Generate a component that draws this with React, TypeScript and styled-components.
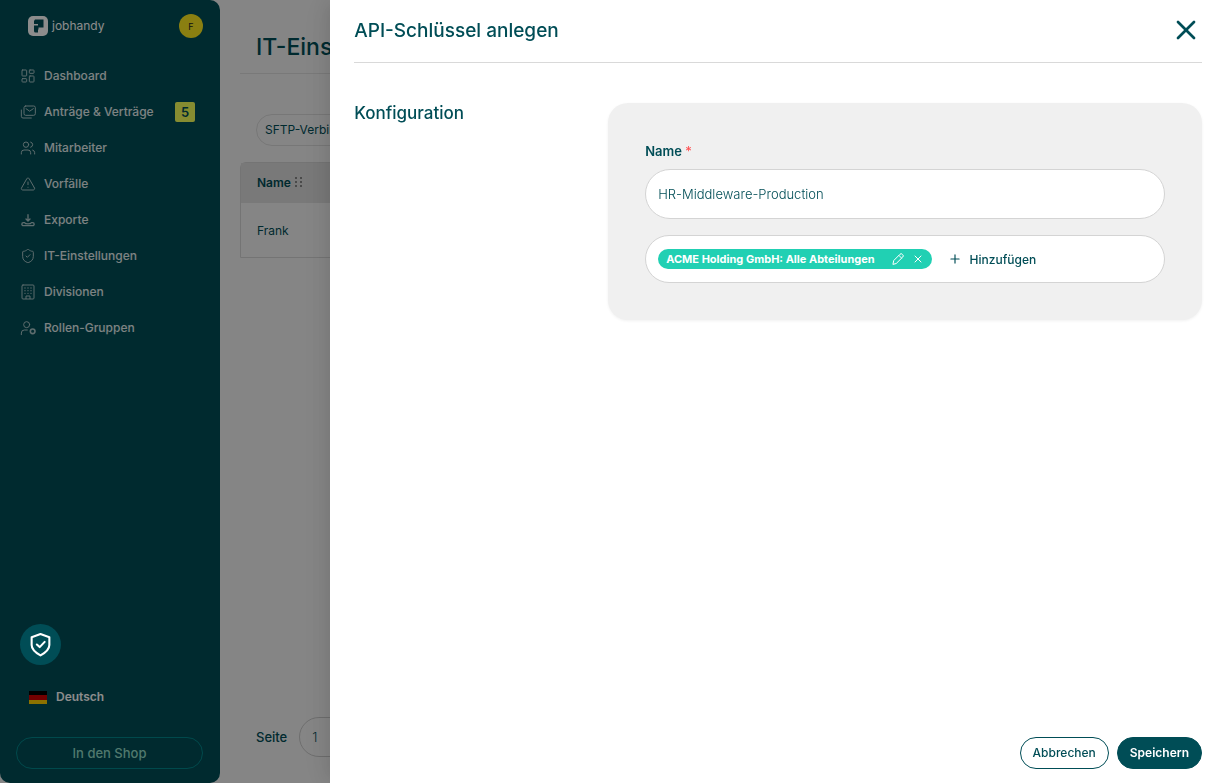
import React from "react";
import styled, { createGlobalStyle } from "styled-components";
import { LayoutDashboard, Users, TriangleAlert, ShieldCheck, X, Plus } from "lucide-react";

const teal = "#004d56";

const GlobalStyle = createGlobalStyle`
  *, *::before, *::after { box-sizing: border-box; }
  body { margin: 0; color: ${teal}; }
  body, button, input { font-family: Inter, "Liberation Sans", sans-serif; }
  button { cursor: pointer; }
`;

const Page = styled.div`
  display: grid;
  grid-template-columns: 220px minmax(0, 1fr);
  min-height: 100vh;
  overflow: hidden;
  background: #f3f3f3;
`;

const Sidebar = styled.aside`
  display: flex;
  flex-direction: column;
  padding: 14px 17px 14px 16px;
  background: ${teal};
  border-radius: 0 10px 10px 10px;
`;

const SidebarHeader = styled.div`
  display: flex;
  align-items: center;
  justify-content: space-between;
  padding-left: 12px;
`;

const Brand = styled.a`
  display: flex;
  align-items: center;
  gap: 4px;
  color: #fff;
  font-size: 12px;
  line-height: 20px;
  text-decoration: none;
`;

const Avatar = styled.button`
  width: 24px;
  height: 24px;
  padding: 0;
  border: 0;
  border-radius: 50%;
  background: #fbe81f;
  color: #222;
  font-size: 9px;
`;

const Nav = styled.nav`
  display: flex;
  flex-direction: column;
  margin-top: 20px;
`;

const NavLink = styled.a`
  display: flex;
  align-items: center;
  gap: 8px;
  height: 36px;
  padding: 0 8px 0 4px;
  color: #e4eeee;
  font-size: 12px;
  font-weight: 500;
  text-decoration: none;
  svg { flex: none; opacity: 0.75; }
`;

const NavLabel = styled.span`
  padding-bottom: 2px;
`;

const Badge = styled.span`
  margin-left: auto;
  width: 20px;
  height: 20px;
  border-radius: 2px;
  background: #f5ff5a;
  color: ${teal};
  font-size: 13px;
  font-weight: 600;
  line-height: 20px;
  text-align: center;
`;

const Language = styled.button`
  display: flex;
  align-items: center;
  gap: 9px;
  margin: auto 0 30px;
  padding: 0 13px;
  border: 0;
  background: none;
  color: #fff;
  font-size: 12px;
  font-weight: 600;
  line-height: 20px;
`;

const ShopButton = styled.button`
  height: 32px;
  padding-bottom: 2px;
  border: 1px solid #00868a;
  border-radius: 16px;
  background: none;
  color: #94dcc8;
  font-size: 13px;
  font-weight: 500;
`;

const Main = styled.main`
  display: flex;
  flex-direction: column;
  padding: 30px 20px 26px;
`;

const PageTitle = styled.h1`
  margin: 0;
  padding: 0 16px 8px;
  border-bottom: 1px solid #ddd;
  font-size: 23px;
  font-weight: 500;
  line-height: 35px;
`;

const FilterButton = styled.button`
  align-self: flex-start;
  height: 32px;
  margin: 40px 16px 16px;
  padding: 0 8px 2px;
  border: 1px solid #d9d9d9;
  border-radius: 16px;
  background: none;
  color: ${teal};
  font-size: 12px;
`;

const Table = styled.table`
  width: 100%;
  border: 1px solid #d4d4d4;
  border-collapse: separate;
  border-spacing: 0;
  border-radius: 6px 6px 0 0;
  font-size: 12px;
  text-align: left;
  th { height: 40px; padding: 0 16px 2px; background: #dcdcdc; font-weight: 600; }
  td { height: 54px; padding: 0 16px; }
`;

const Pagination = styled.label`
  display: flex;
  align-items: center;
  gap: 12px;
  margin-top: auto;
  padding-left: 16px;
  font-size: 13px;
  font-weight: 500;
`;

const PageInput = styled.input`
  width: 80px;
  height: 40px;
  padding: 0 12px;
  border: 1px solid #c8c8c8;
  border-radius: 20px;
  background: none;
  color: ${teal};
  font-size: 13px;
  font-weight: 300;
`;

const Mask = styled.div`
  position: fixed;
  inset: 0;
  background: rgba(0, 0, 0, 0.45);
`;

const Drawer = styled.section`
  position: fixed;
  inset: 0 0 0 auto;
  display: flex;
  flex-direction: column;
  width: 73%;
  padding: 0 21px 0 24px;
  background: #fff;
  box-shadow: -6px 0 16px rgba(0, 0, 0, 0.08), -9px 0 28px rgba(0, 0, 0, 0.05);
`;

const DrawerHeader = styled.header`
  display: flex;
  align-items: center;
  justify-content: space-between;
  height: 63px;
  padding-bottom: 2px;
  border-bottom: 1px solid #d9d9d9;
`;

const DrawerTitle = styled.h2`
  margin: 0;
  padding-top: 2px;
  font-size: 19px;
  font-weight: 500;
  line-height: 28px;
`;

const IconButton = styled.button`
  display: flex;
  padding: 0;
  border: 0;
  background: none;
  color: inherit;
`;

const DrawerBody = styled.div`
  display: grid;
  grid-template-columns: 254px minmax(0, 1fr);
  flex: 1;
  align-items: start;
  padding-top: 40px;
`;

const SectionTitle = styled.h3`
  margin: 0;
  font-size: 17px;
  font-weight: 500;
  line-height: 20px;
`;

const Card = styled.div`
  padding: 38px 37px 37px;
  border-radius: 20px;
  background: #f0f0f0;
  box-shadow: 0 1px 3px rgba(0, 0, 0, 0.06);
`;

const FieldLabel = styled.label`
  display: block;
  margin-bottom: 8px;
  font-size: 13px;
  font-weight: 600;
  line-height: 20px;
`;

const Required = styled.span`
  color: #ff4d4f;
  font-weight: 400;
`;

const TextInput = styled.input`
  display: block;
  width: 100%;
  height: 50px;
  margin-bottom: 16px;
  padding: 0 12px;
  border: 1px solid #d4d4d4;
  border-radius: 25px;
  background: #fff;
  color: ${teal};
  font-size: 13px;
  font-weight: 300;
`;

const TagField = styled.div`
  display: flex;
  align-items: center;
  gap: 16px;
  height: 48px;
  padding: 0 12px;
  border: 1px solid #d4d4d4;
  border-radius: 24px;
  background: #fff;
`;

const Tag = styled.span`
  display: flex;
  align-items: center;
  gap: 8px;
  height: 20px;
  padding: 0 8px;
  border-radius: 10px;
  background: #21d0b3;
  color: #fff;
  font-size: 11px;
  font-weight: 700;
`;

const TagText = styled.span`
  margin-right: 9px;
`;

const AddButton = styled.button`
  display: flex;
  align-items: center;
  gap: 8px;
  padding: 0;
  border: 0;
  background: none;
  color: ${teal};
  font-size: 12px;
  font-weight: 500;
`;

const DrawerFooter = styled.footer`
  display: flex;
  justify-content: flex-end;
  gap: 8px;
  padding-bottom: 14px;
`;

const ActionButton = styled.button<{ $primary?: boolean }>`
  height: 32px;
  padding: 0 12px 2px;
  border: 1px solid ${teal};
  border-radius: 16px;
  background: ${(p) => (p.$primary ? teal : "#fff")};
  color: ${(p) => (p.$primary ? "#fff" : teal)};
  font-size: 12px;
  font-weight: ${(p) => (p.$primary ? 600 : 500)};
`;

const ConsentButton = styled.button`
  position: fixed;
  bottom: 118px;
  left: 20px;
  display: flex;
  align-items: center;
  justify-content: center;
  width: 41px;
  height: 41px;
  padding: 0;
  border: 0;
  border-radius: 50%;
  background: ${teal};
  color: #fff;
`;

const LineIcon = ({ children, size = 16, width = 1.5 }: { children: React.ReactNode; size?: number; width?: number }) => (
  <svg width={size} height={size} viewBox="0 0 24 24" fill="none" stroke="currentColor" strokeWidth={width} strokeLinecap="round" strokeLinejoin="round" aria-hidden="true">
    {children}
  </svg>
);

const Logo = () => (
  <svg width="20" height="20" viewBox="0 0 20 20" aria-hidden="true">
    <rect width="20" height="20" rx="5" fill="#fff" />
    <path d="M7 3.500h8.500V11.500H10.500V13.500H6V9.500H10V8H6V5z" fill={teal} />
    <path d="M6 13H10v3.500H7.500a1.500 1.500 0 0 1-1.500-1.500z" fill={teal} />
  </svg>
);

const MailStack = () => (
  <LineIcon>
    <rect x="6" y="3" width="17" height="14" rx="2.5" />
    <path d="m9 7 5.500 3.800L20 7M2 9v9.500A2.500 2.500 0 0 0 4.500 21H17" />
  </LineIcon>
);

const Download = () => (
  <LineIcon width={2}>
    <path d="M12 4v9M9 10.500l3 3 3-3" />
    <path d="M7 16H5a2 2 0 0 0 0 4.500h14a2 2 0 0 0 0-4.500h-2c-1 2.500-9 2.500-10 0z" />
  </LineIcon>
);

const Building = () => (
  <LineIcon>
    <rect x="3" y="1.500" width="18" height="21" rx="1.5" />
    <path d="M9 22v-4h6v4" />
    <path d="M7.500 6h.01M12 6h.01M16.500 6h.01M7.500 10h.01M12 10h.01M16.500 10h.01M7.500 14h.01M12 14h.01M16.500 14h.01" strokeWidth="2" />
  </LineIcon>
);

const UserRole = () => (
  <LineIcon>
    <circle cx="10" cy="7" r="4.500" />
    <path d="M2 22v-2.500A4.500 4.500 0 0 1 6.500 15H11" />
    <circle cx="19" cy="17" r="3.500" strokeWidth="2.4" />
  </LineIcon>
);

const Pencil = () => (
  <LineIcon size={12} width={2}>
    <path d="m2 22 1.500-7L16 2.500a3 3 0 0 1 4.500 0l1 1a3 3 0 0 1 0 4.500L9 20.500zM14 5l5 5" />
  </LineIcon>
);

const ConsentShield = () => (
  <LineIcon size={25} width={2}>
    <path d="M12 2 20.500 5v7.500c0 4.500-4 7.500-8.500 10-4.500-2.500-8.500-5.500-8.500-10V5z" />
    <path d="m8.500 12 2.700 2.500L16 9.500" />
  </LineIcon>
);

const GermanFlag = () => (
  <svg width="18" height="13" viewBox="0 0 18 13" aria-hidden="true">
    <rect width="18" height="13" fill="#000" />
    <rect y="4" width="18" height="5" fill="#d00000" />
    <rect y="9" width="18" height="4" fill="#ffce00" />
  </svg>
);

const DragDots = () => (
  <svg width="10" height="10" viewBox="0 0 10 10" fill="#888" aria-hidden="true">
    {[0, 4, 8].flatMap((y) => [1, 6].map((x) => <rect key={`${x}-${y}`} x={x} y={y} width="2" height="2" />))}
  </svg>
);

const navItems = [
  { label: "Dashboard", icon: <LayoutDashboard size={16} strokeWidth={1.5} /> },
  { label: "Anträge & Verträge", icon: <MailStack />, count: 5 },
  { label: "Mitarbeiter", icon: <Users size={16} strokeWidth={1.5} /> },
  { label: "Vorfälle", icon: <TriangleAlert size={16} strokeWidth={1.5} /> },
  { label: "Exporte", icon: <Download /> },
  { label: "IT-Einstellungen", icon: <ShieldCheck size={16} strokeWidth={1.5} /> },
  { label: "Divisionen", icon: <Building /> },
  { label: "Rollen-Gruppen", icon: <UserRole /> },
];

export default function App() {
  return (
    <>
      <GlobalStyle />
      <Page>
        <Sidebar>
          <SidebarHeader>
            <Brand href="#"><Logo />jobhandy</Brand>
            <Avatar>F</Avatar>
          </SidebarHeader>
          <Nav>
            {navItems.map((item) => (
              <NavLink href="#" key={item.label}>
                {item.icon}
                <NavLabel>{item.label}</NavLabel>
                {item.count && <Badge>{item.count}</Badge>}
              </NavLink>
            ))}
          </Nav>
          <Language><GermanFlag />Deutsch</Language>
          <ShopButton>In den Shop</ShopButton>
        </Sidebar>
        <Main>
          <PageTitle>IT-Einstellungen</PageTitle>
          <FilterButton>SFTP-Verbindungen</FilterButton>
          <Table>
            <thead><tr><th>Name <DragDots /></th></tr></thead>
            <tbody><tr><td>Frank</td></tr></tbody>
          </Table>
          <Pagination>Seite<PageInput defaultValue="1" /></Pagination>
        </Main>
      </Page>
      <Mask />
      <Drawer role="dialog" aria-labelledby="drawer-title">
        <DrawerHeader>
          <DrawerTitle id="drawer-title">API-Schlüssel anlegen</DrawerTitle>
          <IconButton aria-label="Schließen"><X size={32} strokeWidth={2} /></IconButton>
        </DrawerHeader>
        <DrawerBody>
          <SectionTitle>Konfiguration</SectionTitle>
          <Card>
            <FieldLabel htmlFor="key-name">Name <Required>*</Required></FieldLabel>
            <TextInput id="key-name" defaultValue="HR-Middleware-Production" />
            <TagField>
              <Tag>
                <TagText>ACME Holding GmbH: Alle Abteilungen</TagText>
                <IconButton aria-label="Bearbeiten"><Pencil /></IconButton>
                <IconButton aria-label="Entfernen"><X size={12} strokeWidth={2} /></IconButton>
              </Tag>
              <AddButton><Plus size={14} strokeWidth={2} />Hinzufügen</AddButton>
            </TagField>
          </Card>
        </DrawerBody>
        <DrawerFooter>
          <ActionButton>Abbrechen</ActionButton>
          <ActionButton $primary>Speichern</ActionButton>
        </DrawerFooter>
      </Drawer>
      <ConsentButton aria-label="Datenschutz"><ConsentShield /></ConsentButton>
    </>
  );
}
